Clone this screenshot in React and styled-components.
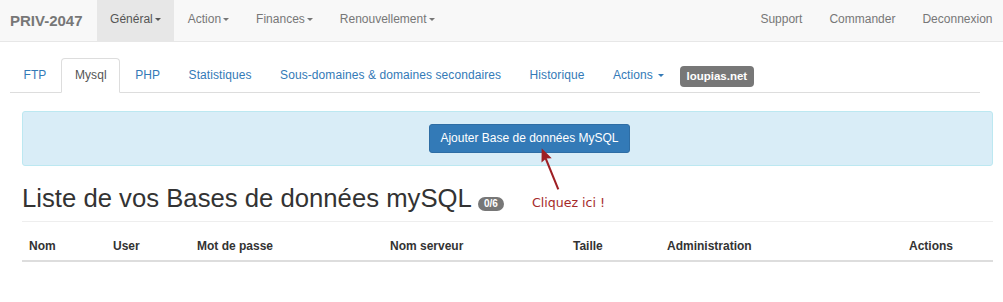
import React from "react";
import styled, { createGlobalStyle } from "styled-components";

const Global = createGlobalStyle`
  html, body { margin: 0; padding: 0; background: #fff; }
  body {
    font-family: "Liberation Sans", Arial, sans-serif;
    font-size: 12px;
    line-height: 17px;
    color: #333;
  }
  * { box-sizing: border-box; }
`;

const Navbar = styled.nav`
  display: flex;
  justify-content: space-between;
  height: 42px;
  background: #f8f8f8;
  border-bottom: 1px solid #e7e7e7;
`;

const NavGroup = styled.ul`
  display: flex;
  margin: 0;
  padding: 0;
  list-style: none;
  margin-right: ${(p) => (p.$right ? "-3px" : "0")};
`;

const Brand = styled.a`
  display: block;
  padding: 0 14px 0 10px;
  font-size: 15px;
  font-weight: bold;
  line-height: 41px;
  color: #777;
  text-decoration: none;
`;

const NavItem = styled.a`
  display: block;
  height: 41px;
  padding: 11px 13.5px 13px;
  line-height: 17px;
  color: ${(p) => (p.$active ? "#555" : "#777")};
  background: ${(p) => (p.$active ? "#e7e7e7" : "transparent")};
  text-decoration: none;
  white-space: nowrap;
`;

const Caret = styled.span`
  display: inline-block;
  width: 0;
  height: 0;
  margin-left: ${(p) => p.$gap || "2px"};
  vertical-align: middle;
  border-top: 3.5px solid currentColor;
  border-left: 3.4px solid transparent;
  border-right: 3.4px solid transparent;
`;

const TabsWrap = styled.div`
  margin: 16px 23px 0 10px;
`;

const Tabs = styled.ul`
  display: flex;
  align-items: flex-start;
  margin: 0;
  padding: 0;
  list-style: none;
  border-bottom: 1px solid #ddd;
`;

const TabItem = styled.li`
  margin: 0 1.5px -1px 0;
`;

const TabLink = styled.a`
  display: block;
  padding: 8px 12.5px;
  line-height: 17px;
  letter-spacing: 0.08px;
  border: 1px solid ${(p) => (p.$active ? "#ddd" : "transparent")};
  border-bottom-color: ${(p) => (p.$active ? "#fff" : "transparent")};
  border-radius: 4px 4px 0 0;
  background: ${(p) => (p.$active ? "#fff" : "transparent")};
  color: ${(p) => (p.$active ? "#555" : "#337ab7")};
  text-decoration: none;
  white-space: nowrap;
`;

const DomainLabel = styled.span`
  display: inline-block;
  margin: 8px 0 0 1px;
  height: 21px;
  padding: 0 6.7px;
  line-height: 21px;
  font-size: 11.5px;
  font-weight: bold;
  color: #fff;
  background: #777;
  border-radius: 4px;
`;

const Content = styled.div`
  position: relative;
  margin: 18px 10px 0 22px;
`;

const Alert = styled.div`
  display: flex;
  justify-content: center;
  padding: 12px 12px 12px 56px;
  background: #d9edf7;
  border: 1px solid #bce8f1;
  border-radius: 3px;
`;

const PrimaryButton = styled.button`
  height: 29px;
  padding: 5px 10.5px;
  font-family: inherit;
  font-size: 12px;
  line-height: 17px;
  color: #fff;
  background: #337ab7;
  border: 1px solid #2e6da4;
  border-radius: 3px;
`;

const PageHeader = styled.div`
  margin-top: 18px;
  padding-bottom: 8.7px;
  border-bottom: 1px solid #eee;
`;

const Title = styled.h1`
  margin: 0;
  font-size: 25.7px;
  font-weight: normal;
  line-height: 28.3px;
  color: #333;
  white-space: nowrap;
`;

const Badge = styled.span`
  display: inline-block;
  padding: 2px 6px;
  font-size: 10px;
  font-weight: bold;
  line-height: 10px;
  color: #fff;
  background: #777;
  border-radius: 10px;
  vertical-align: baseline;
`;

const Hint = styled.span`
  margin-left: 28px;
  font-family: "DejaVu Sans", sans-serif;
  font-size: 12.6px;
  line-height: 12px;
  color: #a52a2a;
`;

const Arrow = styled.svg`
  position: absolute;
  left: 510px;
  top: 30px;
  overflow: visible;
`;

const Table = styled.table`
  width: 100%;
  margin-top: 7px;
  border-collapse: collapse;
  table-layout: fixed;
`;

const Th = styled.th`
  padding: 9px 7px 5px;
  text-align: left;
  font-weight: bold;
  line-height: 17px;
  color: #333;
  border-bottom: 2px solid #ddd;
  white-space: nowrap;
`;

const columns = [
  ["Nom", 84],
  ["User", 84],
  ["Mot de passe", 193],
  ["Nom serveur", 183],
  ["Taille", 94],
  ["Administration", 242],
  ["Actions", 91],
];

const leftNav = [
  ["Général", true],
  ["Action", false],
  ["Finances", false],
  ["Renouvellement", false],
];

const tabs = ["FTP", "Mysql", "PHP", "Statistiques", "Sous-domaines & domaines secondaires", "Historique"];

export default function App() {
  return (
    <>
      <Global />
      <Navbar>
        <NavGroup>
          <li><Brand href="#">PRIV-2047</Brand></li>
          {leftNav.map(([label, active]) => (
            <li key={label}>
              <NavItem href="#" $active={active}>
                {label}
                <Caret />
              </NavItem>
            </li>
          ))}
        </NavGroup>
        <NavGroup $right>
          {["Support", "Commander", "Deconnexion"].map((l) => (
            <li key={l}><NavItem href="#">{l}</NavItem></li>
          ))}
        </NavGroup>
      </Navbar>

      <TabsWrap>
        <Tabs>
          {tabs.map((t) => (
            <TabItem key={t}>
              <TabLink href="#" $active={t === "Mysql"}>{t}</TabLink>
            </TabItem>
          ))}
          <TabItem>
            <TabLink href="#">
              Actions <Caret $gap="1.5px" />
            </TabLink>
          </TabItem>
          <li><DomainLabel>loupias.net</DomainLabel></li>
        </Tabs>
      </TabsWrap>

      <Content>
        <Alert>
          <PrimaryButton>Ajouter Base de données MySQL</PrimaryButton>
        </Alert>
        <PageHeader>
          <Title>
            Liste de vos Bases de données mySQL <Badge>0/6</Badge>
            <Hint>Cliquez ici !</Hint>
          </Title>
        </PageHeader>
        <Arrow width="40" height="55" viewBox="0 0 40 55">
          <line x1="13.5" y1="17" x2="26.3" y2="48.3" stroke="#9e1f24" strokeWidth="2" />
          <polygon points="9.7,7.3 19.7,17.3 14.2,17.6 9.5,21.5" fill="#9e1f24" />
        </Arrow>
        <Table>
          <colgroup>
            {columns.map(([n, w]) => <col key={n} style={{ width: w }} />)}
          </colgroup>
          <thead>
            <tr>
              {columns.map(([n]) => <Th key={n}>{n}</Th>)}
            </tr>
          </thead>
        </Table>
      </Content>
    </>
  );
}
